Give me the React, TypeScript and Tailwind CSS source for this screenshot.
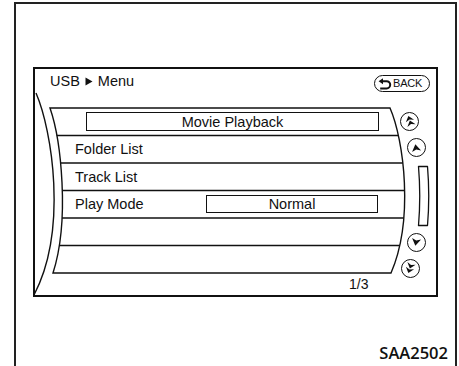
import React from 'react';

const ROWS = [108, 135.5, 163, 190.5, 218, 245.5, 273];

function ScrollButton({ double, down, rot, className }: { double?: boolean; down?: boolean; rot: number; className: string }) {
  const angle = (down ? 180 : 0) + rot;
  return (
    <div className={`w-[19px] h-[19px] rounded-full border-[1.6px] border-[#111] flex items-center justify-center ${className}`}>
      <svg width="12" height="12" viewBox="0 0 10 10">
        <g transform={`rotate(${angle} 5 5)`} fill="#111">
          {double ? (
            <>
              <path d="M5,0.6 L8.6,5 L5,3.7 L1.4,5 Z" />
              <path d="M5,4.6 L8.6,9 L5,7.7 L1.4,9 Z" />
            </>
          ) : (
            <path d="M5,1.8 L8.8,7.8 L5,6.2 L1.2,7.8 Z" />
          )}
        </g>
      </svg>
    </div>
  );
}

function ListFrame() {
  // drawn in page coordinates, list area origin is (35, 93)
  const clip = 'M50,108 L390,108 C404,140 414,220 391,273 L53,273 C70,220 61,140 50,108 Z';
  return (
    <svg className="absolute left-0 top-0 overflow-visible" width="401" height="201" viewBox="0 0 401 201">
      <defs>
        <clipPath id="listClip">
          <path d={clip} transform="translate(-35,-93)" />
        </clipPath>
      </defs>
      <g transform="translate(-35,-93)" fill="none" stroke="#111" strokeWidth="1.4">
        <path d="M36,93 C52,130 68,230 34,295" />
        <path d={clip} />
      </g>
      <g clipPath="url(#listClip)">
        <g transform="translate(-35,-93)" stroke="#111" strokeWidth="1.3">
          {ROWS.slice(1, -1).map((y) => (
            <line key={y} x1="30" x2="420" y1={y} y2={y} />
          ))}
        </g>
      </g>
    </svg>
  );
}

export default function App() {
  return (
    <div className="w-[459px] h-[366px] bg-white overflow-hidden text-[#111]" style={{ fontFamily: '"Liberation Sans", Arial, sans-serif' }}>
      <div className="ml-[14px] mt-[2px] w-[443px] h-[364px] border-l-2 border-t-2 border-r-2 border-[#222] flex flex-col">
        {/* screen */}
        <div className="ml-[17px] mt-[63px] w-[405px] h-[230px] border-2 border-[#111] flex flex-col">
          <div className="h-[24px] flex justify-between pl-[15px] pr-[6px]">
            <div className="flex items-center gap-[5px] text-[14.5px] leading-none">
              <span>USB</span>
              <svg width="8" height="9" viewBox="0 0 8 9">
                <path d="M0.5,0.5 L7.5,4.5 L0.5,8.5 Z" fill="#111" />
              </svg>
              <span>Menu</span>
            </div>
            <div className="self-end mb-[1px] h-[17px] w-[56px] rounded-full border-[1.5px] border-[#111] flex items-center pl-[3px] gap-[1px]">
              <svg width="14" height="12" viewBox="0 0 14 12">
                <path d="M0.6,3.2 L5,0.2 L5,6.2 Z" fill="#111" />
                <path d="M4.5,3.2 H8.6 A3.6,3.6 0 0 1 8.6,10.4 H2.2" fill="none" stroke="#111" strokeWidth="2" />
              </svg>
              <span className="text-[11px] leading-none tracking-[-0.2px]">BACK</span>
            </div>
          </div>

          <div className="relative flex-1 flex">
            <ListFrame />
            <div className="relative w-[365px] pt-[15px] flex flex-col text-[14.5px] leading-none">
              <div className="h-[27.5px] flex items-center pl-[51px]">
                <div className="w-[293px] h-[19px] border-[1.5px] border-[#111] flex items-center justify-center">Movie Playback</div>
              </div>
              <div className="h-[27.5px] flex items-center pl-[40px]">Folder List</div>
              <div className="h-[27.5px] flex items-center pl-[40px]">Track List</div>
              <div className="h-[27.5px] flex items-center pl-[40px]">
                <span className="w-[131px]">Play Mode</span>
                <div className="w-[172px] h-[18px] border-[1.5px] border-[#111] flex items-center justify-center">Normal</div>
              </div>
              <div className="h-[27.5px]" />
              <div className="h-[27.5px]" />
              <div className="pl-[314px] pt-[4px] text-[14px]">1/3</div>
            </div>
            <div className="relative w-[36px] flex flex-col">
              <ScrollButton double rot={-18} className="ml-[0px] mt-[18.5px]" />
              <ScrollButton rot={-10} className="ml-[6.5px] mt-[7.5px]" />
              <svg className="ml-[17px] mt-[8px]" width="14" height="62" viewBox="0 0 14 62">
                <path d="M1.5,1.5 Q4,31 1.5,60.5 L10.5,60.5 Q13,31 10.5,1.5 Z" fill="none" stroke="#111" strokeWidth="1.3" strokeLinejoin="round" />
              </svg>
              <ScrollButton down rot={10} className="ml-[6.5px] mt-[5.5px]" />
              <ScrollButton double down rot={18} className="ml-[0.5px] mt-[7px]" />
            </div>
          </div>
        </div>

        <div className="mt-[48px] pr-[7px] flex justify-end">
          <span className="text-[16.5px] leading-none font-semibold" style={{ fontFamily: '"Open Sans", sans-serif' }}>SAA2502</span>
        </div>
      </div>
    </div>
  );
}
